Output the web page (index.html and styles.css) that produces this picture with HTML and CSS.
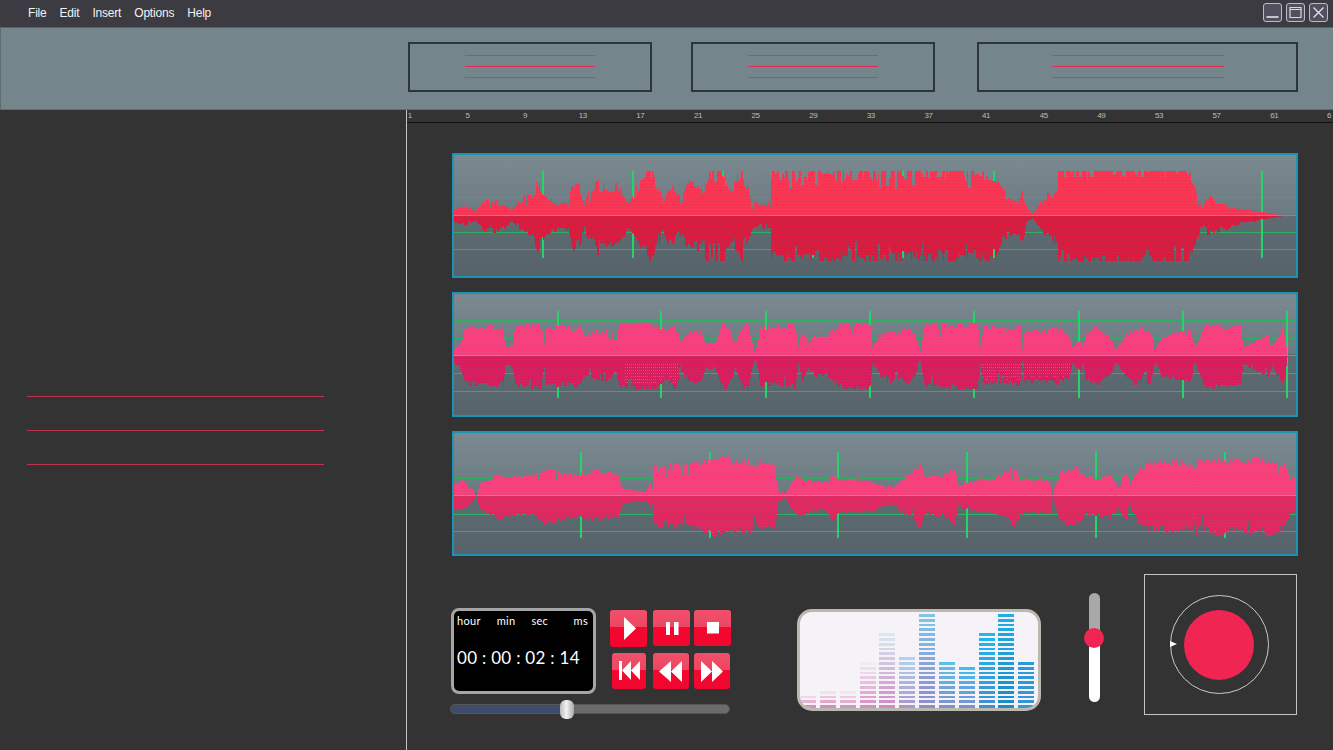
FILE: index.html
```html
<!DOCTYPE html>
<html lang="en">
<head>
  <meta charset="UTF-8">
  <title>Audio Editor</title>
  <link rel="stylesheet" href="styles.css">
</head>
<body>

  <!-- Menu bar -->
  <header class="menubar">
    <nav class="menu">
      <span>File</span>
      <span>Edit</span>
      <span>Insert</span>
      <span>Options</span>
      <span>Help</span>
    </nav>
    <div class="window-buttons">
      <button class="win-btn" aria-label="Minimize">
        <svg viewBox="0 0 14 15"><rect x="1" y="11" width="12" height="2" fill="#c4c4cc"/></svg>
      </button>
      <button class="win-btn" aria-label="Maximize">
        <svg viewBox="0 0 14 15"><path d="M1.500 2.500h11v10h-11z M1.500 4.500h11" fill="none" stroke="#d8d8e0" stroke-width="1.200"/></svg>
      </button>
      <button class="win-btn" aria-label="Close">
        <svg viewBox="0 0 14 15"><path d="M2 2.500l10 10M12 2.500l-10 10" fill="none" stroke="#e4e4ea" stroke-width="1.300"/></svg>
      </button>
    </div>
  </header>

  <!-- Toolbar with three clip slots -->
  <section class="toolbar">
    <div class="slot slot-a"><div class="rules"><i></i><i class="strong"></i><i></i></div></div>
    <div class="slot slot-b"><div class="rules"><i></i><i class="strong"></i><i></i></div></div>
    <div class="slot slot-c"><div class="rules"><i></i><i class="strong"></i><i></i></div></div>
  </section>

  <main class="workspace">
    <!-- Left panel -->
    <aside class="side">
      <div class="side-lines"><i></i><i></i><i></i></div>
    </aside>

    <section class="editor">
      <div class="ruler">
        <span>1</span><span>5</span><span>9</span><span>13</span><span>17</span><span>21</span>
        <span>25</span><span>29</span><span>33</span><span>37</span><span>41</span><span>45</span>
        <span>49</span><span>53</span><span>57</span><span>61</span><span class="ruler-last">6</span>
      </div>

      <!-- Waveforms are drawn by script.js -->
      <div class="tracks">
        <div class="track"><svg id="wave1"></svg></div>
        <div class="track"><svg id="wave2"></svg></div>
        <div class="track"><svg id="wave3"></svg></div>
      </div>

      <div class="controls">
        <div class="transport">
          <div class="transport-top">
            <div class="timer">
              <div class="timer-labels">
                <span>hour</span><span>min</span><span>sec</span><span class="label-ms">ms</span>
              </div>
              <div class="timer-digits">00 : 00 : 02 : 14</div>
            </div>
            <div class="buttons">
              <button class="btn btn-large" aria-label="Play">
                <svg viewBox="0 0 37 37"><path d="M14 7l12 11.500-12 11.500z"/></svg>
              </button>
              <button class="btn" aria-label="Pause">
                <svg viewBox="0 0 37 36"><path d="M13 12h4v13h-4zM21 12h4.500v13h-4.500z"/></svg>
              </button>
              <button class="btn" aria-label="Stop">
                <svg viewBox="0 0 37 36"><path d="M13 12h12v11.500h-12z"/></svg>
              </button>
              <button class="btn btn-small" aria-label="Skip to start">
                <svg viewBox="0 0 34 36"><path d="M7 8h3v19h-3zM10 17.500l9-9.500v19zM19 17.500l9-9.500v19z"/></svg>
              </button>
              <button class="btn btn-low" aria-label="Rewind">
                <svg viewBox="0 0 36 36"><path d="M6 18.500l12-10.500v21zM18 18.500l11-10.500v21z"/></svg>
              </button>
              <button class="btn btn-low" aria-label="Fast forward">
                <svg viewBox="0 0 36 36"><path d="M7 8l11 10.500-11 10.500zM18 8l11 10.500-11 10.500z"/></svg>
              </button>
            </div>
          </div>
          <div class="seek">
            <div class="seek-fill"></div>
            <div class="seek-thumb"></div>
          </div>
        </div>

        <div class="equalizer" id="equalizer"></div>

        <div class="volume">
          <div class="volume-off"></div>
          <div class="volume-on"></div>
          <div class="volume-knob"></div>
        </div>

        <div class="record">
          <div class="record-ring">
            <div class="record-dot"></div>
            <div class="record-mark"></div>
          </div>
        </div>
      </div>
    </section>
  </main>

  <script src="script.js"></script>
</body>
</html>
```

FILE: styles.css
```css
/* Global */
* {
  box-sizing: border-box;
}
html, body {
  height: 100%;
}
body {
  margin: 0;
  height: 750px;
  overflow: hidden;
  display: flex;
  flex-direction: column;
  background: #333333;
  font-family: "Liberation Sans", Arial, sans-serif;
  color: #fff;
}
button {
  padding: 0;
  border: none;
  cursor: pointer;
}

/* Menu bar */
.menubar {
  height: 27px;
  flex: none;
  display: flex;
  justify-content: space-between;
  align-items: center;
  padding: 0 5px 0 28px;
  background: #3b3b41;
}
.menu {
  display: flex;
  gap: 13px;
  font-size: 12px;
  letter-spacing: -0.2px;
  color: #f2f2f2;
  margin-top: -2px;
}
.window-buttons {
  display: flex;
  gap: 4px;
  margin-top: -2px;
}
.win-btn {
  width: 19px;
  height: 19px;
  padding: 1px;
  border: 1.500px solid #bdbcc6;
  border-radius: 3px;
  background: #50505f;
}
.win-btn svg {
  display: block;
  width: 100%;
  height: 100%;
}

/* Toolbar */
.toolbar {
  height: 83px;
  flex: none;
  display: flex;
  padding: 14px 35px 0 408px;
  background: #74858c;
  border-left: 1px solid #5e6c72;
  border-bottom: 1px solid #5e6c72;
  border-top: 1px solid #56625f;
}
.slot {
  height: 50px;
  display: flex;
  justify-content: center;
  border: 2px solid #2f3437;
}
.slot-a { width: 244px; margin-left: -1px; }
.slot-b { width: 244px; margin-left: 39px; }
.slot-c { width: 321px; margin-left: 42px; }
.rules {
  margin-top: 11px;
  height: 23px;
  display: flex;
  flex-direction: column;
  justify-content: space-between;
}
.slot-a .rules, .slot-b .rules { width: 130px; }
.slot-c .rules { width: 172px; }
.rules i {
  display: block;
  height: 1px;
  background: #c9415f;
}
.rules i.strong {
  background: #e22c54;
}

/* Workspace */
.workspace {
  flex: 1;
  display: flex;
  min-height: 0;
}
.side {
  width: 407px;
  flex: none;
  padding: 286px 0 0 27px;
  border-right: 1px solid #c4c4c4;
}
.side-lines {
  width: 297px;
  display: flex;
  flex-direction: column;
  gap: 33px;
}
.side-lines i {
  display: block;
  height: 1px;
  background: #c2304f;
}

.editor {
  flex: 1;
  min-width: 0;
}

/* Ruler */
.ruler {
  height: 13px;
  display: flex;
  border-bottom: 1px solid #121212;
  overflow: hidden;
  font-size: 8px;
  letter-spacing: -0.4px;
  line-height: 11px;
  color: #bdbdbd;
}
.ruler span {
  flex: none;
  width: 57.640px;
  text-align: center;
}
.ruler span:first-child {
  margin-left: -26px;
}
.ruler .ruler-last {
  width: 52px;
}

/* Tracks */
.tracks {
  margin: 30px 35px 0 45px;
  display: flex;
  flex-direction: column;
  gap: 14px;
}
.track {
  height: 125px;
  border: 2px solid #1b93b7;
  background: linear-gradient(#7a8a90 0%, #6c7b81 49%, #5f6c72 50%, #57636a 100%);
  overflow: hidden;
}
.track svg {
  display: block;
  width: 842px;
  height: 121px;
}

/* Bottom controls */
.controls {
  display: flex;
  align-items: flex-start;
  margin: 18px 35px 0 44px;
}
.transport {
  width: 281px;
  flex: none;
  margin-top: 34px;
}
.transport-top {
  display: flex;
  gap: 14px;
}
.timer {
  width: 145px;
  height: 86px;
  padding: 3px 5px 0 3px;
  background: #000;
  border: 3px solid #a5a5a5;
  border-radius: 8px;
  font-family: Lato, "Liberation Sans", sans-serif;
}
.timer-labels {
  display: flex;
  gap: 16px;
  font-size: 11px;
  line-height: 13px;
  letter-spacing: 0.3px;
}
.label-ms {
  margin-left: auto;
}
.timer-digits {
  margin-top: 20px;
  font-size: 17px;
  line-height: 22px;
  letter-spacing: 0.3px;
  white-space: nowrap;
}
.buttons {
  display: grid;
  grid-template-columns: 39px 37px 37px;
  grid-auto-rows: 37px;
  column-gap: 4px;
  row-gap: 6px;
  margin-top: 2px;
  justify-items: start;
}
.btn {
  width: 37px;
  height: 36px;
  border-radius: 3px;
  background: linear-gradient(#f0506c 0%, #ec4762 46%, #f5082f 47%, #f10630 100%);
}
.btn svg {
  display: block;
  width: 100%;
  height: 100%;
  fill: #fff;
}
.btn-large {
  height: 37px;
}
.btn-small {
  width: 34px;
  margin-left: 2px;
}
.btn-low {
  width: 36px;
}
.seek {
  position: relative;
  width: 280px;
  height: 10px;
  margin-top: 10px;
  margin-left: -1px;
  border: 1px solid #565656;
  border-radius: 5px;
  background: #6b6b6b;
}
.seek-fill {
  width: 42%;
  height: 100%;
  border-radius: 4px 0 0 4px;
  background: #3e4c6b;
}
.seek-thumb {
  position: absolute;
  left: 109px;
  top: -5px;
  width: 14px;
  height: 19px;
  border-radius: 6px;
  background: linear-gradient(90deg, #b9b9b9, #f2f2f2 45%, #a9a9a9);
}

/* Equalizer */
.equalizer {
  width: 244px;
  height: 102px;
  flex: none;
  margin: 35px 0 0 65px;
  padding: 0;
  display: flex;
  align-items: flex-end;
  gap: 3.850px;
  background: #f5f3f7;
  border: 3px solid #b9b9b0;
  border-radius: 15px;
  overflow: hidden;
}
.eq-col {
  width: 16px;
  flex: none;
  display: flex;
  flex-direction: column-reverse;
  gap: 2px;
}
.eq-seg {
  height: 2.800px;
}

/* Volume slider */
.volume {
  position: relative;
  width: 11px;
  height: 109px;
  flex: none;
  margin: 19px 0 0 48px;
  display: flex;
  flex-direction: column;
  border-radius: 6px;
}
.volume-off {
  height: 45px;
  background: #a8a8a8;
  border-radius: 6px 6px 0 0;
}
.volume-on {
  flex: 1;
  background: #fff;
  border-radius: 0 0 6px 6px;
}
.volume-knob {
  position: absolute;
  left: -5px;
  top: 35px;
  width: 20px;
  height: 20px;
  border-radius: 50%;
  background: #f02552;
}

/* Record panel */
.record {
  width: 153px;
  height: 141px;
  flex: none;
  margin-left: 44px;
  padding-right: 3px;
  display: flex;
  justify-content: center;
  align-items: center;
  border: 1px solid #c4c4c4;
}
.record-ring {
  position: relative;
  width: 99px;
  height: 99px;
  display: flex;
  justify-content: center;
  align-items: center;
  border: 1px solid #c9c9c9;
  border-radius: 50%;
}
.record-dot {
  width: 70px;
  height: 70px;
  border-radius: 50%;
  background: #f02552;
}
.record-mark {
  position: absolute;
  left: -1px;
  top: 45px;
  width: 0;
  height: 0;
  border-top: 3px solid transparent;
  border-bottom: 3px solid transparent;
  border-left: 7px solid #fff;
}
```

FILE: script.js
```js
// Seeded random so the waveforms come out the same every time
let seed = 7;
function rand() {
  seed = (seed * 16807) % 2147483647;
  return seed / 2147483647;
}

const tracks = [
  {
    id: 'wave1', left: 453, center: 61.5, max: 45, gain: 1.22, jitter: 0.42, notch: 0.07,
    top: '#fb3350', topDither: '#f0405c', bottom: '#dc1a3d', bottomDither: '#cc2648',
    lines: [25, 43, 78, 95], ticks: [542, 632, 722, 812, 902, 993, 1261], tickTop: 17, tickBottom: 104,
    env: [[454,7],[465,9],[475,5],[485,14],[500,14],[512,6],[520,15],[532,20],[537,31],[545,20],[560,11],[568,12],
      [572,32],[580,25],[584,12],[590,25],[598,34],[610,28],[620,27],[628,10],[640,33],[645,40],[652,43],[662,16],
      [670,29],[680,16],[690,33],[700,30],[710,42],[722,43],[730,26],[742,43],[752,12],[760,10],[765,14],[770,10],
      [771,42],[900,42],[985,42],[995,40],[1005,20],[1015,15],[1022,22],[1027,6],[1032,2],[1045,19],[1057,24],
      [1058,47],[1185,47],[1190,36],[1195,28],[1200,12],[1210,17],[1225,12],[1240,7],[1255,5],[1270,2],[1285,0]]
  },
  {
    id: 'wave2', left: 453, center: 62.5, max: 33, gain: 1.1, jitter: 0.2, notch: 0.03,
    top: '#fb3d7e', topDither: '#f04a86', bottom: '#dd1a5c', bottomDither: '#cc2a62',
    lines: [27, 45, 80, 98], ticks: [557, 660, 765, 869, 973, 1078, 1182, 1286], tickTop: 18, tickBottom: 105,
    haze: [[980, 1070], [625, 680]],
    env: [[453,6],[455,8],[460,12],[465,27],[475,28],[490,29],[503,28],[505,8],[512,12],[515,28],[525,30],[540,32],
      [544,12],[546,28],[581,28],[585,18],[595,25],[610,24],[615,15],[620,30],[625,33],[650,32],[665,25],[675,30],
      [680,15],[690,25],[700,25],[705,12],[715,12],[720,28],[725,33],[730,25],[735,12],[740,26],[747,33],[752,12],
      [755,3],[760,28],[795,30],[798,8],[802,25],[808,12],[815,20],[825,18],[830,24],[845,32],[870,32],[872,8],
      [878,18],[890,25],[900,22],[908,30],[915,20],[920,5],[924,29],[960,32],[977,33],[980,8],[983,27],[1020,27],
      [1022,6],[1024,25],[1045,25],[1055,27],[1069,22],[1072,8],[1080,15],[1083,8],[1085,22],[1098,28],[1112,15],
      [1115,6],[1125,20],[1135,27],[1150,25],[1155,6],[1162,20],[1175,23],[1190,24],[1195,8],[1205,30],[1240,29],
      [1243,8],[1255,14],[1268,22],[1272,10],[1278,20],[1282,28],[1285,20],[1287,1]]
  },
  {
    id: 'wave3', left: 453, center: 64, max: 42, gain: 1.14, jitter: 0.24, notch: 0.03,
    top: '#fb3d7a', topDither: '#f04a82', bottom: '#e2265f', bottomDither: '#d43466',
    lines: [29, 46, 82, 99], ticks: [580, 709, 837, 966, 1095, 1224], tickTop: 20, tickBottom: 106,
    env: [[454,13],[462,15],[470,8],[476,0],[480,12],[490,17],[498,22],[510,19],[525,18],[540,22],[545,28],[560,24],
      [575,20],[585,23],[600,24],[618,20],[622,8],[635,5],[645,4],[650,12],[652,8],[653,28],[670,28],[680,30],
      [700,32],[712,35],[722,40],[735,33],[750,34],[755,30],[762,33],[775,30],[778,6],[785,2],[790,10],[795,20],
      [810,15],[825,14],[832,22],[840,15],[860,16],[870,14],[885,10],[893,8],[905,18],[920,30],[925,17],[945,20],
      [955,30],[957,10],[975,15],[995,17],[1015,28],[1020,17],[1050,15],[1052,1],[1060,25],[1075,28],[1085,18],
      [1110,20],[1118,12],[1125,24],[1130,12],[1138,26],[1150,32],[1178,33],[1192,30],[1193,15],[1195,42],[1200,32],
      [1220,35],[1240,33],[1270,36],[1285,30],[1289,18],[1297,17]]
  }
];

function envelopeAt(env, x) {
  if (x <= env[0][0]) return env[0][1];
  for (let i = 1; i < env.length; i++) {
    if (x <= env[i][0]) {
      const [x0, h0] = env[i - 1];
      const [x1, h1] = env[i];
      return h0 + (h1 - h0) * (x - x0) / (x1 - x0);
    }
  }
  return 0;
}

function addPath(svg, d, stroke, width, dash) {
  const path = document.createElementNS('http://www.w3.org/2000/svg', 'path');
  path.setAttribute('d', d);
  path.setAttribute('stroke', stroke);
  path.setAttribute('fill', 'none');
  path.setAttribute('stroke-width', width);
  path.setAttribute('shape-rendering', 'crispEdges');
  if (dash) path.setAttribute('stroke-dasharray', dash);
  svg.appendChild(path);
}

// Pick the next peak factor, now and then a deep notch
function nextFactor(t) {
  if (rand() < t.notch) return 0.6 + rand() * 0.15;
  return t.gain - rand() * t.jitter;
}

function drawTrack(t) {
  const svg = document.getElementById(t.id);
  svg.setAttribute('viewBox', '1 1 842 121');

  // Green grid behind the wave
  let grid = '';
  t.lines.forEach(y => { grid += `M0 ${y + 0.5}H844`; });
  addPath(svg, grid, '#2fb060', 1);
  let ticks = '';
  t.ticks.forEach(x => { ticks += `M${x - t.left + 1} ${t.tickTop}V${t.tickBottom}`; });
  addPath(svg, ticks, '#25d466', 2);

  let upper = '';
  let lower = '';
  let upperDots = '';
  let lowerDots = '';
  let haze = '';
  let holdUp = 0;
  let holdDown = 0;
  let upFactor = 1;
  let downFactor = 1;
  const mid = Math.round(t.center);
  for (let x = t.left; x < t.left + 844; x++) {
    const h = envelopeAt(t.env, x);
    if (h <= 0) continue;
    // keep a value over a few columns so the peaks come out chunky
    if (--holdUp <= 0) {
      upFactor = nextFactor(t);
      holdUp = 1 + Math.floor(rand() * 3);
    }
    if (--holdDown <= 0) {
      downFactor = nextFactor(t);
      holdDown = 1 + Math.floor(rand() * 3);
    }
    const px = x - t.left + 0.5;
    const yUp = Math.round(mid - Math.min(h * upFactor, t.max));
    const yDown = Math.round(mid + Math.min(h * downFactor, t.max));
    upper += `M${px} ${mid}V${yUp}`;
    lower += `M${px} ${mid}V${yDown}`;
    if (x % 2 === 0) {
      upperDots += `M${px} ${mid}V${yUp}`;
      lowerDots += `M${px} ${mid}V${yDown}`;
    }
    if (t.haze && t.haze.some(r => x >= r[0] && x <= r[1]) && x % 2 === 1) {
      haze += `M${px} ${mid + 8}V${yDown - 4}`;
    }
  }
  addPath(svg, upper, t.top, 1);
  addPath(svg, lower, t.bottom, 1);
  addPath(svg, upperDots, t.topDither, 1, '1 2');
  addPath(svg, lowerDots, t.bottomDither, 1, '1 2');
  if (haze) addPath(svg, haze, 'rgba(240,130,170,0.45)', 1, '1 2');
  addPath(svg, `M0 ${mid - 0.5}H844`, 'rgba(255,170,185,0.35)', 1);
}

tracks.forEach(drawTrack);

// Equalizer: segments per column, colour runs from the foot to the head of a column
const columns = [
  { count: 3, foot: [216, 140, 190], head: [240, 215, 230] },
  { count: 4, foot: [216, 140, 190], head: [240, 225, 235] },
  { count: 4, foot: [216, 145, 195], head: [242, 232, 240] },
  { count: 10, foot: [216, 140, 195], head: [240, 236, 240] },
  { count: 16, foot: [205, 140, 195], head: [216, 232, 242] },
  { count: 11, foot: [170, 150, 205], head: [176, 212, 236] },
  { count: 21, foot: [143, 140, 204], head: [126, 200, 234] },
  { count: 10, foot: [127, 144, 204], head: [92, 192, 234] },
  { count: 9, foot: [122, 144, 208], head: [64, 188, 238] },
  { count: 16, foot: [63, 143, 207], head: [32, 184, 238] },
  { count: 21, foot: [26, 140, 200], head: [32, 176, 228] },
  { count: 10, foot: [58, 149, 212], head: [42, 154, 216] }
];
const equalizer = document.getElementById('equalizer');
columns.forEach(col => {
  const el = document.createElement('div');
  el.className = 'eq-col';
  for (let s = 0; s < col.count; s++) {
    const seg = document.createElement('div');
    seg.className = 'eq-seg';
    const mix = s / Math.max(col.count - 1, 1);
    const rgb = col.foot.map((c, i) => Math.round(c + (col.head[i] - c) * mix));
    seg.style.background = `rgb(${rgb.join(',')})`;
    el.appendChild(seg);
  }
  equalizer.appendChild(el);
});
```
